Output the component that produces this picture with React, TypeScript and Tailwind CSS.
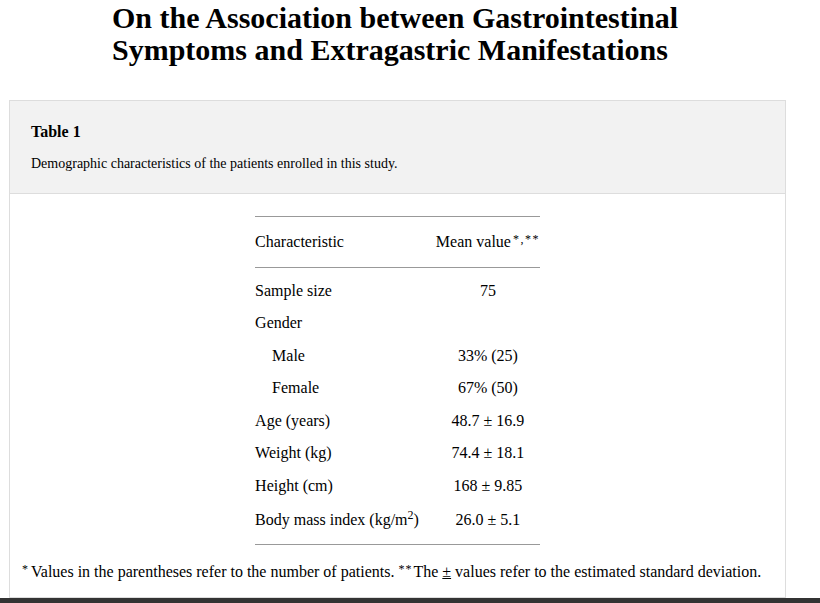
import React from "react";

const rows: { label: React.ReactNode; value: React.ReactNode; indent?: boolean; tall?: boolean }[] = [
  { label: "Sample size", value: "75" },
  { label: "Gender", value: "" },
  { label: "Male", value: "33% (25)", indent: true },
  { label: "Female", value: "67% (50)", indent: true },
  { label: "Age (years)", value: "48.7 ± 16.9" },
  { label: "Weight (kg)", value: "74.4 ± 18.1" },
  { label: "Height (cm)", value: "168 ± 9.85" },
  {
    label: (
      <>
        Body mass index (kg/m<sup className="text-[12px]">2</sup>)
      </>
    ),
    value: "26.0 ± 5.1",
    tall: true,
  },
];

export default function App() {
  return (
    <div
      className="w-[820px] h-[603px] overflow-hidden bg-white text-black relative"
      style={{ fontFamily: '"Liberation Serif", "Times New Roman", serif' }}
    >
      <h1 className="ml-[112px] pt-[2px] text-[30px] leading-[32px] font-bold">
        On the Association between Gastrointestinal
        <br />
        Symptoms and Extragastric Manifestations
      </h1>
      <div className="mt-[34px] ml-[9px] w-[777px] h-[498px] border border-[#dddddd] flex flex-col">
        <div className="bg-[#f2f2f2] border-b border-[#dddddd] h-[93px] px-[21px] pt-[20px]">
          <div className="text-[16px] font-bold leading-[22px]">Table 1</div>
          <div className="text-[14px] leading-[20px] mt-[11px]">
            Demographic characteristics of the patients enrolled in this study.
          </div>
        </div>
        <div className="flex flex-col items-center pt-[22px]">
          <table className="border-collapse border-t border-b border-[#999999] text-[16px]">
            <thead>
              <tr className="border-b border-[#999999]">
                <th className="text-left font-normal h-[51px] pr-[17px]">Characteristic</th>
                <th className="text-center font-normal h-[51px]">
                  Mean value<sup className="text-[12px] tracking-[1.5px] top-[-4px] pl-[2px]">*,**</sup>
                </th>
              </tr>
            </thead>
            <tbody>
              <tr>
                <td className="h-[7px] p-0" />
                <td className="h-[7px] p-0" />
              </tr>
              {rows.map((r, i) => (
                <tr key={i}>
                  <td
                    className={`text-left pr-[17px] ${r.tall ? "h-[35px]" : "h-[32.5px]"} ${
                      r.indent ? "pl-[17px]" : ""
                    }`}
                  >
                    {r.label}
                  </td>
                  <td className={`text-center ${r.tall ? "h-[35px]" : "h-[32.5px]"}`}>{r.value}</td>
                </tr>
              ))}
              <tr>
                <td className="h-[7px] p-0" />
                <td className="h-[7px] p-0" />
              </tr>
            </tbody>
          </table>
        </div>
        <div className="text-[16px] ml-[12px] mt-[17px] leading-[20px]">
          <sup className="text-[12px] top-[-4px] pr-[3px]">*</sup>Values in the parentheses refer to the number of
          patients. <sup className="text-[12px] tracking-[1px] top-[-4px] pr-[1px]">**</sup>The{" "}
          <span className="underline">±</span> values refer to the estimated standard deviation.
        </div>
      </div>
      <div className="absolute left-0 bottom-0 w-full h-[5px] bg-[#333333]" />
    </div>
  );
}
